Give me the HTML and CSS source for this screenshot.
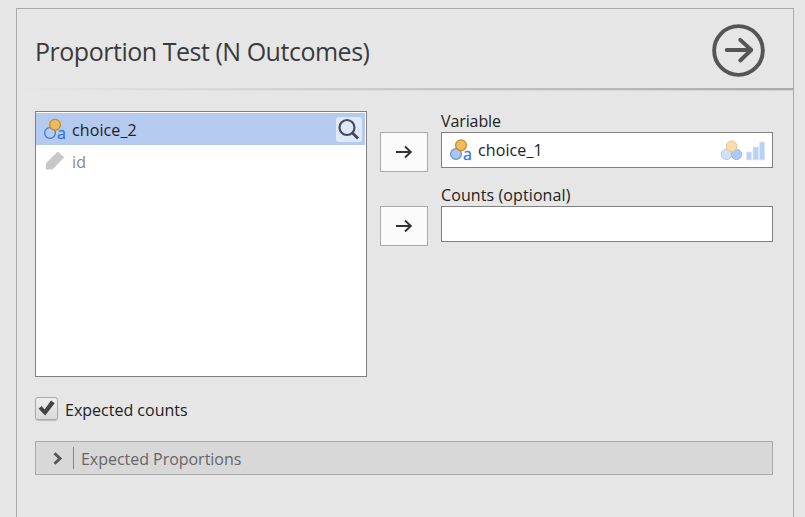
FILE: index.html
```html
<!DOCTYPE html>
<html lang="en">
<head>
<meta charset="utf-8">
<title>Proportion Test (N Outcomes)</title>
<link rel="stylesheet" href="styles.css">
</head>
<body>
<main class="panel">
  <header class="header">
    <h1 class="title">Proportion Test (N Outcomes)</h1>
    <svg class="go" viewBox="0 0 54 54" fill="none" stroke="#555" stroke-width="4" stroke-linecap="round" stroke-linejoin="round">
      <circle cx="27" cy="27" r="24.8"/>
      <path d="M15 26.5H40M28.8 16.2L40 26.5L28.8 37.2"/>
    </svg>
  </header>
  <div class="divider"></div>
  <div class="body">
    <div class="assign">
      <div class="list">
        <div class="row selected">
          <svg class="icon" viewBox="0 0 24 24"><circle cx="7" cy="16" r="5.4" fill="#b5caef" stroke="#3e7ee0" stroke-width="1.3"/><circle cx="12" cy="7.7" r="5.4" fill="#f0bb60" stroke="#c98e1e" stroke-width="1.3"/><text x="14" y="21.5" class="glyph">a</text></svg>
          <span class="name">choice_2</span>
          <div class="search"><svg viewBox="0 0 26 25" fill="none" stroke="#414c5e"><circle cx="11" cy="10.5" r="7.5" stroke-width="2.2"/><path d="M16.5 16L22 21.5" stroke-width="3"/></svg></div>
        </div>
        <div class="row muted">
          <svg class="icon" viewBox="0 0 24 24"><path d="M3 14.2L14.8 2.4L21.2 8.2L9.8 20.3L3 20.8Z" fill="#c8c8c8"/></svg>
          <span class="name">id</span>
        </div>
      </div>
      <div class="targets">
        <div class="target">
          <button class="move"><svg viewBox="0 0 18 14" fill="none" stroke="#333" stroke-width="1.9"><path d="M1 7H15.5M10 1.5L15.8 7L10 12.5"/></svg></button>
          <div class="slot">
            <div class="label">Variable</div>
            <div class="field">
              <svg class="icon" viewBox="0 0 24 24"><circle cx="7" cy="16" r="5.4" fill="#a9c5f3" stroke="#6795dc" stroke-width="1.3"/><circle cx="12" cy="7.2" r="5.4" fill="#f0bb60" stroke="#c98e1e" stroke-width="1.3"/><text x="14" y="21.5" class="glyph">a</text></svg>
              <span class="name chosen">choice_1</span>
              <svg class="types" viewBox="0 0 46 22"><circle cx="6.5" cy="15.4" r="5.2" fill="#d3e1f8" stroke="#adc8f3"/><circle cx="16.6" cy="15.4" r="5.2" fill="#aec9f3" stroke="#9bbcf0"/><circle cx="11.6" cy="7.2" r="5.3" fill="#f8dcae" stroke="#e8c68c"/><path d="M26.5 13h5v8h-5zM33 8h5.6v13H33zM39.5 3h5.2v18h-5.2z" fill="#bad1f5" stroke="#dce7fa" stroke-width=".8"/></svg>
            </div>
          </div>
        </div>
        <div class="target">
          <button class="move"><svg viewBox="0 0 18 14" fill="none" stroke="#333" stroke-width="1.9"><path d="M1 7H15.5M10 1.5L15.8 7L10 12.5"/></svg></button>
          <div class="slot">
            <div class="label counts">Counts (optional)</div>
            <div class="field"></div>
          </div>
        </div>
      </div>
    </div>
    <div class="option">
      <span class="check"><svg viewBox="0 0 22 22"><path d="M2.6 10.8L5.6 8L8.6 11.4L15 2.6L18.7 5.2L9.2 17.4Z" fill="#444"/></svg></span>
      <span class="option-text">Expected counts</span>
    </div>
    <div class="section">
      <svg class="chevron" viewBox="0 0 10 14" fill="none" stroke="#555" stroke-width="2.9"><path d="M1.5 2.3L7 7.5L1.5 12.7"/></svg>
      <span class="section-text">Expected Proportions</span>
    </div>
  </div>
</main>
</body>
</html>
```
FILE: styles.css
```css
* { box-sizing: border-box; }
body {
  margin: 0;
  height: 517px;
  overflow: hidden;
  padding: 8px 11px 0 16px;
  background: #e6e6e6;
  font-family: "Open Sans", "Noto Sans", sans-serif;
  font-size: 16px;
  color: #222;
}
.panel {
  height: 520px;
  border: 1px solid #aaa;
}
.header {
  display: flex;
  justify-content: space-between;
  align-items: center;
  height: 79px;
  padding: 4px 28px 0 18px;
}
.title {
  margin: 0;
  font-size: 25px;
  line-height: 34px;
  font-weight: 400;
  letter-spacing: -0.48px;
  color: #3a3a3a;
}
.go { width: 53px; height: 53px; }
.divider {
  height: 3px;
  background: linear-gradient(to bottom, transparent 66%, #e6e6e6aa 66%), linear-gradient(to right, #e6e6e6, #aaa);
}
.body { padding: 20px 20px 0 18px; }
.assign { display: flex; gap: 13px; }
.list {
  width: 332px;
  height: 266px;
  padding: 1px 1px 1px 0;
  border: 1px solid #808080;
  background: #fff;
}
.row {
  display: flex;
  align-items: center;
  height: 32px;
  padding: 0 3px 0 7px;
}
.selected { background: #b5caef; }
.muted { color: #888; }
.icon { width: 24px; height: 24px; flex: none; overflow: visible; }
.glyph { font: 16px "Open Sans", sans-serif; fill: #3477dd; stroke: #3477dd; stroke-width: .3px; }
.name { margin-left: 5px; padding-top: 2px; line-height: 22px; letter-spacing: 0.1px; }
.chosen { padding-top: 0; }
.search {
  width: 26px;
  height: 25px;
  margin-left: auto;
  border-radius: 3px;
  background: #e0e8f8;
}
.search svg { display: block; width: 26px; height: 25px; }
.targets { flex: 1; }
.target { display: flex; gap: 13px; height: 74px; }
.move {
  width: 48px;
  height: 40px;
  margin-top: 21px;
  padding: 0;
  border: 1px solid #aaa;
  background: #fafafa;
  display: flex;
  align-items: center;
  justify-content: center;
}
.move svg { width: 18px; height: 14px; }
.slot { flex: 1; }
.label { height: 21px; line-height: 20px; letter-spacing: -0.1px; }
.counts { letter-spacing: 0.1px; }
.field {
  display: flex;
  align-items: center;
  height: 36px;
  padding: 0 6px 0 7px;
  border: 1px solid #808080;
  background: #fff;
}
.types { width: 46px; height: 22px; margin-left: auto; }
.option { display: flex; align-items: center; height: 24px; margin-top: 20px; }
.check {
  width: 23px;
  height: 23px;
  margin-bottom: 1px;
  border: 1px solid #aaa;
  border-radius: 3px;
  background: linear-gradient(#eee, #dadada);
  box-shadow: 0 1px 1px #bbb;
}
.check svg { display: block; width: 22px; height: 22px; }
.option-text { margin-left: 7px; padding-top: 2px; letter-spacing: 0; }
.section {
  display: flex;
  align-items: center;
  height: 34px;
  margin-top: 20px;
  padding-left: 17px;
  border: 1px solid #aaa;
  background: #d8d8d8;
  color: #666;
}
.chevron { width: 10px; height: 14px; }
.section-text {
  height: 22px;
  margin-left: 10px;
  padding-left: 7px;
  border-left: 1px solid #888;
  line-height: 24px;
  letter-spacing: -0.03px;
}
```
